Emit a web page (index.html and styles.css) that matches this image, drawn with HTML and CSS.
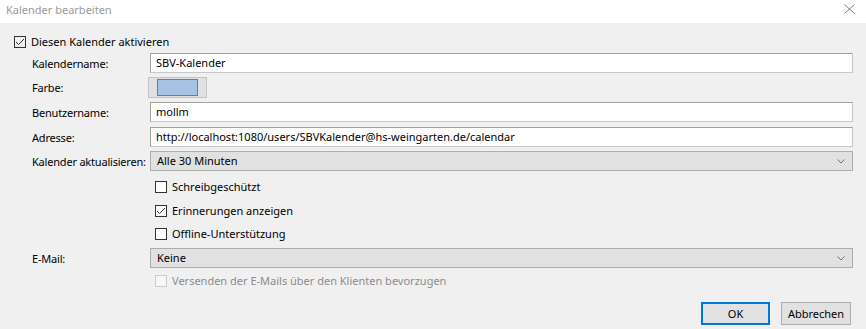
FILE: index.html
```html
<!DOCTYPE html>
<html lang="de">
<head>
<meta charset="UTF-8">
<meta name="viewport" content="width=device-width, initial-scale=1.0">
<title>Kalender bearbeiten</title>
<link rel="stylesheet" href="styles.css">
</head>
<body>

<div class="dialog">
  <div class="titlebar">
    <span class="title">Kalender bearbeiten</span>
    <svg class="close" width="11" height="10" viewBox="0 0 11 10">
      <path d="M0.5 0.5 L10.5 9.5 M10.5 0.5 L0.5 9.5" stroke="#7a7a7a" stroke-width="1" fill="none"/>
    </svg>
  </div>

  <div class="content">
    <label class="check main-check">
      <span class="box">
        <svg width="10" height="10" viewBox="0 0 10 10"><path d="M1 5 L3.5 7.5 L9 2" stroke="#333" stroke-width="1" fill="none"/></svg>
      </span>
      Diesen Kalender aktivieren
    </label>

    <div class="row r-name">
      <span class="label">Kalendername:</span>
      <div class="field">SBV-Kalender</div>
    </div>

    <div class="row r-color">
      <span class="label">Farbe:</span>
      <div class="color-button"><span class="swatch"></span></div>
    </div>

    <div class="row r-user">
      <span class="label">Benutzername:</span>
      <div class="field">mollm</div>
    </div>

    <div class="row r-addr">
      <span class="label">Adresse:</span>
      <div class="field">http://localhost:1080/users/SBVKalender@hs-weingarten.de/calendar</div>
    </div>

    <div class="row r-refresh">
      <span class="label">Kalender aktualisieren:</span>
      <div class="select">
        Alle 30 Minuten
        <svg class="chevron" width="8" height="5" viewBox="0 0 8 5"><path d="M0.5 0.5 L4 4 L7.5 0.5" stroke="#707070" fill="none"/></svg>
      </div>
    </div>

    <div class="options">
      <label class="check opt-1">
        <span class="box"></span>
        Schreibgeschützt
      </label>
      <label class="check opt-2">
        <span class="box">
          <svg width="10" height="10" viewBox="0 0 10 10"><path d="M1 5 L3.5 7.5 L9 2" stroke="#333" stroke-width="1" fill="none"/></svg>
        </span>
        Erinnerungen anzeigen
      </label>
      <label class="check opt-3">
        <span class="box"></span>
        Offline-Unterstützung
      </label>
    </div>

    <div class="row r-mail">
      <span class="label">E-Mail:</span>
      <div class="select">
        Keine
        <svg class="chevron" width="8" height="5" viewBox="0 0 8 5"><path d="M0.5 0.5 L4 4 L7.5 0.5" stroke="#707070" fill="none"/></svg>
      </div>
    </div>

    <div class="options">
      <label class="check disabled opt-4">
        <span class="box"></span>
        Versenden der E-Mails über den Klienten bevorzugen
      </label>
    </div>

    <div class="buttons">
      <button class="btn default">OK</button>
      <button class="btn">Abbrechen</button>
    </div>
  </div>
</div>

</body>
</html>
```

FILE: styles.css
```css
body {
  margin: 0;
  padding: 0;
  font-family: "Noto Sans", "Open Sans", sans-serif;
  font-size: 11px;
  color: #000;
  background-color: #f0f0f0;
}
.dialog {
  width: 866px;
  height: 329px;
  background-color: #f0f0f0;
  overflow: hidden;
}
.titlebar {
  height: 23px;
  background-color: #fff;
  display: flex;
  align-items: center;
  justify-content: space-between;
  padding: 0 11px 0 6px;
}
.title {
  color: #9a9a9a;
  margin-top: -4px;
}
.close {
  margin-top: -6px;
}
.content {
  padding: 13px 13px 0 14px;
}
.check {
  display: flex;
  align-items: center;
  height: 12px;
  line-height: 12px;
  white-space: nowrap;
}
.box {
  width: 10px;
  height: 10px;
  border: 1px solid #333;
  background-color: #fff;
  margin-right: 5px;
  flex-shrink: 0;
  display: flex;
}
.main-check .box {
  background-color: transparent;
}
.row {
  display: flex;
  align-items: center;
  padding-left: 18px;
}
.label {
  width: 118px;
  flex-shrink: 0;
  white-space: nowrap;
  letter-spacing: -0.2px;
}
.field {
  flex: 1;
  height: 18px;
  line-height: 18px;
  border: 1px solid #a0a0a0;
  border-right-color: #c8c8c8;
  border-bottom-color: #c8c8c8;
  background-color: #fff;
  padding-left: 5px;
  white-space: nowrap;
}
.r-name { margin-top: 5px; }
.r-color { margin-top: 4px; }
.r-user { margin-top: 4px; }
.r-addr { margin-top: 5px; }
.r-refresh { margin-top: 4px; }
.r-mail { margin-top: 8px; }
.color-button {
  width: 57px;
  height: 19px;
  border: 1px solid #c4c4c4;
  background-color: #e1e1e1;
  margin-left: -2px;
  display: flex;
  align-items: center;
  justify-content: center;
}
.swatch {
  width: 39px;
  height: 15px;
  border: 1px solid #7a7a7a;
  background-color: #a7c3e3;
}
.select {
  flex: 1;
  height: 18px;
  line-height: 18px;
  border: 1px solid #adadad;
  background-color: #e1e1e1;
  padding-left: 6px;
  padding-right: 7px;
  display: flex;
  align-items: center;
  justify-content: space-between;
}
.options {
  padding-left: 141px;
}
.opt-1 { margin-top: 10px; }
.opt-2 { margin-top: 12px; }
.opt-3 { margin-top: 11px; }
.opt-4 { margin-top: 7px; }
.disabled {
  color: #8c8c8c;
}
.disabled .box {
  border-color: #cccccc;
  background-color: #f7f7f7;
}
.buttons {
  display: flex;
  justify-content: flex-end;
  gap: 11px;
  margin-top: 15px;
  padding-right: 2px;
}
.btn {
  width: 70px;
  height: 23px;
  padding: 0;
  font-family: inherit;
  font-size: 11px;
  color: #000;
  background-color: #e1e1e1;
  border: 1px solid #adadad;
}
.btn.default {
  width: 69px;
  border: 2px solid #0078d7;
}
```
